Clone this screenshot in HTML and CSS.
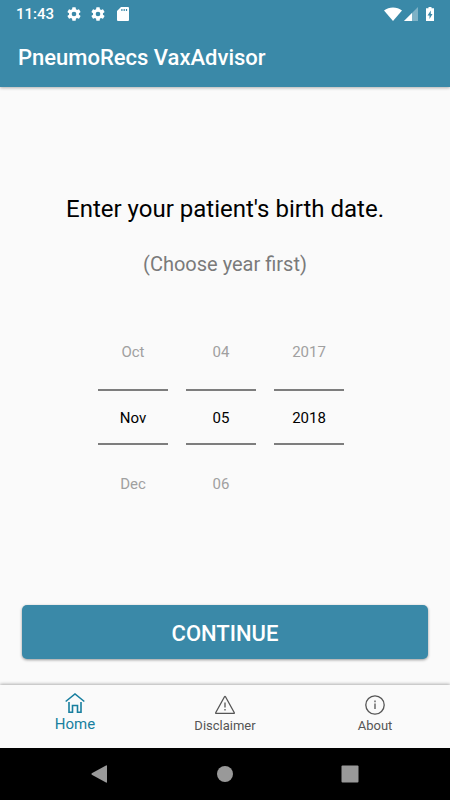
FILE: index.html
```html
<!DOCTYPE html>
<html lang="en">
<head>
    <meta charset="UTF-8">
    <meta name="viewport" content="width=device-width, initial-scale=1.0">
    <title>PneumoRecs VaxAdvisor</title>
    <link rel="stylesheet" href="styles.css">
</head>
<body>
    <!-- Top bar -->
    <header class="top">
        <div class="status-bar">
            <span class="clock">11:43</span>
            <svg class="status-icon" viewBox="0 0 24 24"><use href="#gear"/></svg>
            <svg class="status-icon" viewBox="0 0 24 24">
                <path id="gear" fill="#fff" d="M19.400 13a7.500 7.500 0 0 0 0-2l2.200-1.700a.5.5 0 0 0 .1-.6l-2-3.500a.5.5 0 0 0-.6-.2l-2.500 1a7.300 7.300 0 0 0-1.700-1l-.4-2.600a.5.5 0 0 0-.5-.4h-4a.5.5 0 0 0-.5.4L9.100 5a7.700 7.700 0 0 0-1.700 1l-2.500-1a.5.5 0 0 0-.6.2l-2 3.500a.5.5 0 0 0 .1.6L4.600 11a7.900 7.900 0 0 0 0 2l-2.200 1.700a.5.5 0 0 0-.1.6l2 3.500c.1.200.4.300.6.200l2.500-1c.5.400 1.100.7 1.700 1l.4 2.600c0 .2.200.4.500.4h4c.3 0 .5-.2.500-.4l.4-2.600a7.300 7.300 0 0 0 1.700-1l2.500 1c.2.100.5 0 .6-.2l2-3.500a.5.5 0 0 0-.1-.6zM12 15.500a3.500 3.500 0 1 1 0-7 3.500 3.500 0 0 1 0 7z"/>
            </svg>
            <svg class="card-icon" viewBox="0 0 12 14"><path fill="#fff" d="M11 0H4L0 4v9q0 1 1 1h10q1 0 1-1V1q0-1-1-1zM5.500 4H4.300V2h1.200zm2.300 0H6.600V2h1.200zm2.300 0H8.900V2h1.200z"/></svg>
            <svg class="wifi-icon" viewBox="0 0 18 14"><path fill="#fff" d="M9 14L0 3.500C5 -.6 13 -.6 18 3.500z"/></svg>
            <svg class="signal-icon" viewBox="0 0 14 14"><path fill="#fff" opacity=".35" d="M14 0v14H0z"/><path fill="#fff" d="M8 6v8H0z"/></svg>
            <svg class="battery-icon" viewBox="0 0 8 14"><path fill="#fff" d="M2.500 0h3v1.300H8V14H0V1.300h2.500z"/><path fill="#3a89a8" d="M4.800 3.500L1.500 8.500h2v3.500L6.500 7h-1.700z"/></svg>
        </div>
        <h1>PneumoRecs VaxAdvisor</h1>
    </header>

    <!-- Birth date form -->
    <main>
        <h2>Enter your patient's birth date.</h2>
        <p class="hint">(Choose year first)</p>
        <div class="date-picker">
            <div class="column">
                <button class="step">Oct</button>
                <input type="text" aria-label="Month" value="Nov">
                <button class="step">Dec</button>
            </div>
            <div class="column">
                <button class="step">04</button>
                <input type="text" aria-label="Day" value="05">
                <button class="step">06</button>
            </div>
            <div class="column">
                <button class="step">2017</button>
                <input type="text" aria-label="Year" value="2018">
            </div>
        </div>
        <button class="continue">CONTINUE</button>
    </main>

    <!-- Bottom tabs -->
    <nav class="tabs">
        <a href="#" class="tab active">
            <svg class="tab-icon" viewBox="0 0 20 20"><path d="M.7 8.500L10 1l9.300 7.500M4 9v10.200h3.500v-6.700h5v6.700H16V9"/></svg>
            Home
        </a>
        <a href="#" class="tab">
            <svg class="tab-icon" viewBox="0 0 20 20"><path d="M9.500 1.800L.8 17.500q-.4.8.4.8h17.600q.8 0 .4-.8L10.500 1.800q-.5-.8-1 0z"/><path d="M10 7.500v5M10 14v1.600"/></svg>
            Disclaimer
        </a>
        <a href="#" class="tab">
            <svg class="tab-icon" viewBox="0 0 20 20"><circle cx="10" cy="10" r="9.200"/><path d="M10 8.500v5.500M10 5.600v1.600"/></svg>
            About
        </a>
    </nav>

    <!-- System navigation -->
    <div class="system-nav">
        <button aria-label="Back"><svg viewBox="0 0 18 18"><path d="M15 .5q1-.5 1 .5v16q0 1-1 .5L.8 9.700q-.8-.7 0-1.400z"/></svg></button>
        <button aria-label="Home screen"><svg viewBox="0 0 18 18"><circle cx="9" cy="9" r="8"/></svg></button>
        <button aria-label="Recent apps"><svg viewBox="0 0 18 18"><rect x=".5" y=".5" width="17" height="17" rx="1"/></svg></button>
    </div>
</body>
</html>
```

FILE: styles.css
```css
* {
    margin: 0;
    padding: 0;
    box-sizing: border-box;
}
body {
    min-height: 100vh;
    display: flex;
    flex-direction: column;
    font-family: Roboto, sans-serif;
    background-color: #fafafa;
    color: #000;
}
button, input {
    font-family: inherit;
    border: none;
    background: none;
}
/* Top bar */
.top {
    background-color: #3a89a8;
    color: #fff;
    box-shadow: 0 1px 3px rgba(0, 0, 0, 0.3);
}
.status-bar {
    display: flex;
    align-items: center;
    height: 27px;
    padding: 0 16px;
}
.clock {
    font-size: 15px;
    font-weight: 500;
    line-height: 28px;
    margin-right: 4px;
}
.status-icon {
    width: 16px;
    height: 16px;
    margin-left: 8px;
}
.card-icon {
    width: 12px;
    height: 14px;
    margin-left: 11px;
}
.wifi-icon {
    width: 18px;
    height: 14px;
    margin-left: auto;
}
.signal-icon {
    width: 14px;
    height: 14px;
    margin: 0 8px 0 2px;
}
.battery-icon {
    width: 8px;
    height: 14px;
}
h1 {
    font-size: 22px;
    font-weight: 500;
    line-height: 58px;
    padding: 2px 18px 0;
}
/* Birth date form */
main {
    flex: 1;
    display: flex;
    flex-direction: column;
    align-items: center;
    padding: 106px 22px 26px;
}
h2 {
    font-size: 24px;
    font-weight: 400;
    line-height: 32px;
}
.hint {
    margin-top: 25px;
    font-size: 20px;
    line-height: 28px;
    color: #7a7a7a;
}
.date-picker {
    display: flex;
    gap: 18px;
    margin: 50px 0;
    padding-right: 8px;
}
.column {
    width: 70px;
    display: flex;
    flex-direction: column;
    gap: 15px;
}
.step, .column input {
    height: 46px;
    padding-top: 2px;
    font-size: 15px;
    text-align: center;
    color: #a0a0a0;
}
.column input {
    width: 100%;
    height: 56px;
    border-top: 2px solid #7d7d7d;
    border-bottom: 2px solid #7d7d7d;
    color: #000;
}
.continue {
    width: 100%;
    height: 54px;
    padding-top: 2px;
    margin-top: auto;
    border-radius: 5px;
    background-color: #3a89a8;
    box-shadow: 0 1px 3px rgba(0, 0, 0, 0.4);
    color: #fff;
    font-size: 22px;
    font-weight: 500;
}
/* Bottom tabs */
.tabs {
    display: flex;
    height: 63px;
    box-shadow: 0 -1px 3px rgba(0, 0, 0, 0.3);
}
.tab {
    flex: 1;
    display: flex;
    flex-direction: column;
    align-items: center;
    padding-top: 10px;
    font-size: 13px;
    line-height: 22px;
    color: #555;
    text-decoration: none;
}
.tab.active {
    padding-top: 8px;
    font-size: 15px;
    color: #187f9f;
}
.tab-icon {
    width: 20px;
    height: 20px;
    fill: none;
    stroke: currentColor;
    stroke-width: 1.3;
}
.active .tab-icon {
    stroke-width: 1.6;
}
/* System navigation */
.system-nav {
    display: flex;
    justify-content: center;
    gap: 107px;
    height: 52px;
    background-color: #000;
}
.system-nav button {
    width: 18px;
}
.system-nav svg {
    display: block;
    width: 18px;
    height: 18px;
    fill: #999;
}
```
